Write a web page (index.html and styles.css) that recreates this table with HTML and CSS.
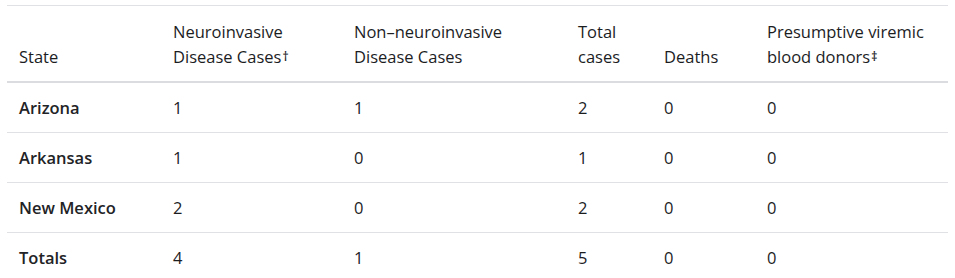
FILE: index.html
```html
<!DOCTYPE html>
<html lang="en">
<head>
<meta charset="utf-8">
<title>Cases by State</title>
<link rel="stylesheet" href="styles.css">
</head>
<body>
<div class="wrap">
<table class="data">
  <colgroup>
    <col class="c1"><col class="c2"><col class="c3"><col class="c4"><col class="c5"><col class="c6">
  </colgroup>
  <thead>
    <tr>
      <th scope="col">State</th>
      <th scope="col">Neuroinvasive Disease Cases<span class="mark">†</span></th>
      <th scope="col">Non–neuroinvasive Disease Cases</th>
      <th scope="col">Total cases</th>
      <th scope="col">Deaths</th>
      <th scope="col">Presumptive viremic blood donors<span class="mark">‡</span></th>
    </tr>
  </thead>
  <tbody>
    <tr><th scope="row">Arizona</th><td>1</td><td>1</td><td>2</td><td>0</td><td>0</td></tr>
    <tr><th scope="row">Arkansas</th><td>1</td><td>0</td><td>1</td><td>0</td><td>0</td></tr>
    <tr><th scope="row">New Mexico</th><td>2</td><td>0</td><td>2</td><td>0</td><td>0</td></tr>
    <tr><th scope="row">Totals</th><td>4</td><td>1</td><td>5</td><td>0</td><td>0</td></tr>
  </tbody>
</table>
</div>
</body>
</html>
```

FILE: styles.css
```css
html, body {
  margin: 0;
  padding: 0;
  background: #ffffff;
}

body {
  font-family: "Open Sans", "Noto Sans", Arial, sans-serif;
  font-size: 16.5px;
  line-height: 25px;
  color: #1c1d1f;
}

.wrap {
  padding: 5px 7px 0 7px;
}

.data {
  width: 100%;
  table-layout: fixed;
  border-collapse: collapse;
  border-top: 1px solid #e0e1e4;
}

.c1 { width: 154px; }
.c2 { width: 181px; }
.c3 { width: 224px; }
.c4 { width: 86px; }
.c5 { width: 103px; }

.data th,
.data td {
  padding: 12px;
  text-align: left;
  vertical-align: bottom;
  font-weight: 400;
}

.data thead th {
  padding-top: 13px;
  padding-bottom: 12px;
  border-bottom: 2px solid #dadce0;
}

.data tbody th,
.data tbody td {
  vertical-align: top;
  padding-top: 12px;
  padding-bottom: 12px;
  border-bottom: 1px solid #e0e1e4;
}

.data tbody th {
  font-weight: 600;
  color: #222326;
}

.mark {
  font-size: 12px;
  font-weight: 600;
  line-height: 1;
  vertical-align: 2px;
  margin-left: 1px;
}
```
